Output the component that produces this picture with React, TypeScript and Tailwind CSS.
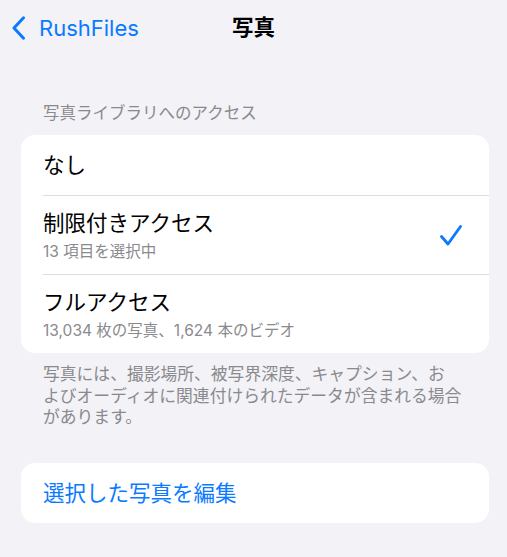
const font = { fontFamily: 'Inter, "Noto Sans CJK JP", sans-serif' };

type Option = {
  title: string;
  subtitle?: string;
  selected?: boolean;
};

const options: Option[] = [
  { title: "なし" },
  { title: "制限付きアクセス", subtitle: "13 項目を選択中", selected: true },
  { title: "フルアクセス", subtitle: "13,034 枚の写真、1,624 本のビデオ" },
];

function CheckMark() {
  return (
    <svg width="22" height="21" viewBox="0 0 22 21" fill="none" aria-hidden="true">
      <path
        d="M1.5 11.5 L8 19 L20.5 1.5"
        stroke="#0a7aff"
        strokeWidth="2.8"
        strokeLinecap="round"
        strokeLinejoin="round"
      />
    </svg>
  );
}

function OptionRow({ option, first }: { option: Option; first: boolean }) {
  return (
    <div className="pl-[22px]">
      <div
        className={
          first
            ? "flex h-[60px] items-center pr-[27px]"
            : "flex h-[79px] items-center border-t border-[#dedee0] pr-[27px]"
        }
      >
        <div className="flex flex-1 flex-col">
          <span className="text-[21.5px] leading-[28px] text-black">{option.title}</span>
          {option.subtitle && (
            <span className="mt-[5px] text-[15.5px] leading-[20px] text-[#8a8a8e]">
              {option.subtitle}
            </span>
          )}
        </div>
        {option.selected && <CheckMark />}
      </div>
    </div>
  );
}

export default function App() {
  return (
    <div className="h-[557px] w-[507px] overflow-hidden bg-[#f2f2f7]" style={font}>
      <header className="grid h-[56px] grid-cols-[1fr_auto_1fr] items-center px-[12px]">
        <button type="button" className="flex items-center text-[#0a7aff]">
          <svg width="14" height="24" viewBox="0 0 14 24" fill="none" aria-hidden="true">
            <path
              d="M11.5 1.8 L2 12 L11.5 22.2"
              stroke="#0a7aff"
              strokeWidth="3"
              strokeLinecap="round"
              strokeLinejoin="round"
            />
          </svg>
          <span className="ml-[13px] text-[22px] leading-none">RushFiles</span>
        </button>
        <h1 className="text-[21.5px] font-bold leading-none text-black">写真</h1>
        <div />
      </header>

      <p className="pl-[43px] pt-[46px] text-[16.5px] leading-[22px] text-[#8a8a8e]">
        写真ライブラリへのアクセス
      </p>

      <div className="ml-[21px] mr-[18px] mt-[11px] overflow-hidden rounded-[14px] bg-white">
        {options.map((option, i) => (
          <OptionRow key={option.title} option={option} first={i === 0} />
        ))}
      </div>

      <div className="mt-[11px] whitespace-nowrap pl-[43px] text-[16.8px] leading-[21.5px] text-[#8a8a8e]">
        <p>写真には、撮影場所、被写界深度、キャプション、お</p>
        <p>よびオーディオに関連付けられたデータが含まれる場合</p>
        <p>があります。</p>
      </div>

      <div className="ml-[21px] mr-[18px] mt-[34px] flex h-[60px] items-center rounded-[14px] bg-white pl-[22px]">
        <span className="text-[21.5px] leading-[28px] text-[#0a7aff]">選択した写真を編集</span>
      </div>
    </div>
  );
}
